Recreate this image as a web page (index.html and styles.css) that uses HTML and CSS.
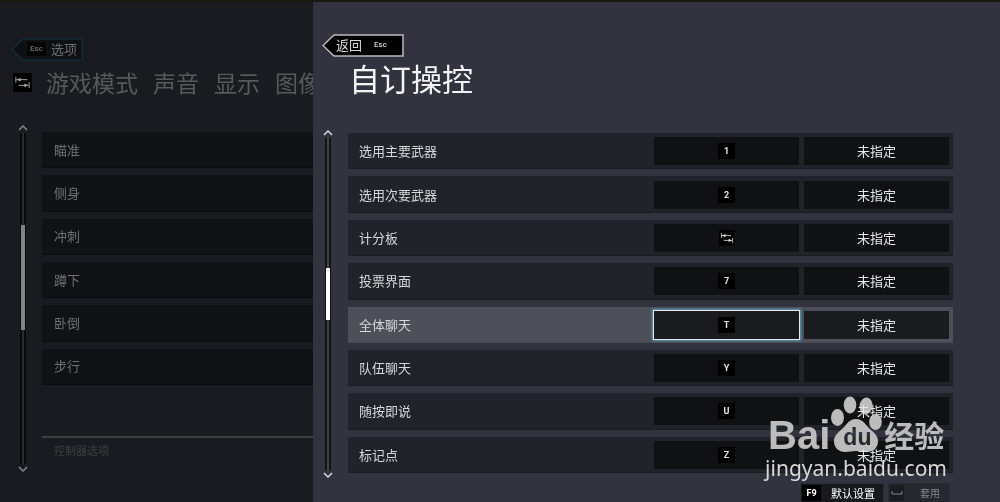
FILE: index.html
```html
<!DOCTYPE html>
<html lang="zh-CN">
<head>
<meta charset="utf-8">
<title>自订操控</title>
<link rel="stylesheet" href="styles.css">
</head>
<body>
<svg class="defs" aria-hidden="true">
  <symbol id="tab-key" viewBox="0 0 20 20">
    <path d="M3 4v6M3.500 7H15M17 10v6M6 13h10" fill="none" stroke="currentColor" stroke-width="1"/>
    <path d="M4 7l4-2v4zM16 13l-4-2v4z" fill="currentColor"/>
  </symbol>
  <symbol id="up" viewBox="0 0 10 6"><path d="M1 5l4-4 4 4" fill="none" stroke="currentColor" stroke-width="1.500"/></symbol>
  <symbol id="down" viewBox="0 0 10 6"><path d="M1 1l4 4 4-4" fill="none" stroke="currentColor" stroke-width="1.500"/></symbol>
</svg>
<main class="screen">
  <section class="options">
    <button class="back back-dim" type="button">
      <svg class="back-shape" viewBox="0 0 72 23" preserveAspectRatio="none"><path d="M1 11.500L12 1H71V22H12Z"/></svg>
      <kbd>Esc</kbd><span>选项</span>
    </button>
    <nav class="tabs">
      <svg class="tab-icon"><use href="#tab-key"/></svg>
      <a href="#mode">游戏模式</a><a href="#sound">声音</a><a href="#display">显示</a><a href="#video">图像</a>
    </nav>
    <div class="body">
      <div class="scroller">
        <svg class="arrow"><use href="#up"/></svg>
        <div class="track"><div class="thumb"></div></div>
        <svg class="arrow"><use href="#down"/></svg>
      </div>
      <div class="side">
        <ul class="list">
          <li>瞄准</li><li>侧身</li><li>冲刺</li><li>蹲下</li><li>卧倒</li><li>步行</li>
        </ul>
        <h2 class="group">控制器选项</h2>
      </div>
    </div>
  </section>
  <section class="panel">
    <button class="back" type="button">
      <svg class="back-shape" viewBox="0 0 82 23" preserveAspectRatio="none"><path d="M1 11.500L12 1H81V22H12Z"/></svg>
      <span>返回</span><kbd>Esc</kbd>
    </button>
    <h1 class="title">自订操控</h1>
    <div class="body">
      <div class="scroller">
        <svg class="arrow"><use href="#up"/></svg>
        <div class="track"><div class="thumb"></div></div>
        <svg class="arrow"><use href="#down"/></svg>
      </div>
      <div class="bindings">
        <div class="row"><span>选用主要武器</span><button type="button"><kbd>1</kbd></button><button type="button">未指定</button></div>
        <div class="row"><span>选用次要武器</span><button type="button"><kbd>2</kbd></button><button type="button">未指定</button></div>
        <div class="row"><span>计分板</span><button type="button" aria-label="Tab"><svg class="key-icon"><use href="#tab-key"/></svg></button><button type="button">未指定</button></div>
        <div class="row"><span>投票界面</span><button type="button"><kbd>7</kbd></button><button type="button">未指定</button></div>
        <div class="row active"><span>全体聊天</span><button type="button" class="selected"><kbd>T</kbd></button><button type="button">未指定</button></div>
        <div class="row"><span>队伍聊天</span><button type="button"><kbd>Y</kbd></button><button type="button">未指定</button></div>
        <div class="row"><span>随按即说</span><button type="button"><kbd>U</kbd></button><button type="button">未指定</button></div>
        <div class="row"><span>标记点</span><button type="button"><kbd>Z</kbd></button><button type="button">未指定</button></div>
      </div>
    </div>
    <footer class="actions">
      <button type="button" class="action"><kbd>F9</kbd><span>默认设置</span></button>
      <button type="button" class="action apply"><kbd><svg class="space" viewBox="0 0 12 5"><path d="M1 0v3h10V0" fill="none" stroke="currentColor"/></svg></kbd><span>套用</span></button>
    </footer>
  </section>
  <div class="watermark">
    <div class="brand">
      <span class="bai">Bai</span>
      <span class="paw">
        <svg viewBox="0 0 52 56">
          <ellipse cx="7.500" cy="21.500" rx="6.500" ry="8.500"/>
          <ellipse cx="20" cy="9" rx="6.300" ry="8.500"/>
          <ellipse cx="36" cy="10" rx="6.500" ry="8.500" transform="rotate(8 36 10)"/>
          <ellipse cx="45.500" cy="26" rx="6.300" ry="8"/>
          <path d="M26 23c5 0 8 3 11 7 4 5 11 8 11 15 0 7-5 11-11 11-4 0-7-1-11-1s-7 1-11 1C9 56 4 52 4 45c0-7 7-10 11-15 3-4 6-7 11-7z"/>
        </svg>
        <span class="du">du</span>
      </span>
      <span class="jing">经验</span>
    </div>
    <div class="url">jingyan.baidu.com</div>
  </div>
</main>
</body>
</html>
```
FILE: styles.css
```css
* { box-sizing: border-box; margin: 0; padding: 0; }
body {
  background: #32333f;
  color: #d6d7d8;
  font: 400 13px/20px "Noto Sans CJK SC", sans-serif;
  overflow: hidden;
}
button { border: 0; background: none; color: inherit; font: inherit; }
kbd { font: 700 9px/16px Roboto, sans-serif; }
.defs { position: absolute; width: 0; height: 0; }
.screen {
  position: relative;
  display: grid;
  grid-template-columns: 313fr 687fr;
  height: 100vh;
  border-top: 2px solid #19190f;
}
.options, .panel { display: flex; flex-direction: column; min-width: 0; min-height: 0; }
.options { background: #1a1b20; color: #6e6f70; overflow: hidden; padding: 36px 0 30px; }
.panel { background: #32333f; padding: 32px 47px 0 9px; }

.back {
  position: relative;
  display: flex;
  align-items: center;
  align-self: flex-start;
  gap: 12px;
  width: 82px;
  height: 23px;
  padding: 0 0 2px 14px;
  flex: none;
}
.back > span, .back > kbd { position: relative; }
.back-shape { position: absolute; inset: 0; width: 100%; height: 100%; }
.back-shape path { fill: #000; stroke: #b9babd; stroke-width: 1.500; }
.back kbd { font-size: 8px; font-weight: 500; }
.back-dim { width: 72px; gap: 5px; margin-left: 11px; padding-left: 16px; }
.back-dim .back-shape path { fill: #0e1014; stroke: #152c38; }
.back-dim kbd { width: 19px; height: 14px; line-height: 14px; background: #050506; text-align: center; }

.tabs { display: flex; align-items: center; gap: 15px; padding: 0 0 2px 13px; height: 44px; flex: none; white-space: nowrap; }
.tabs a { color: #58595b; font-size: 23px; line-height: 32px; text-decoration: none; }
.tab-icon { width: 19px; height: 19px; background: #000; color: #aaa; margin-right: -1px; flex: none; }
.title { font-size: 31px; font-weight: 400; line-height: 42px; padding: 0 0 2px 27px; color: #f4f4f5; flex: none; }

.body { display: flex; flex: 1; min-height: 0; }
.scroller { display: flex; flex-direction: column; align-items: center; gap: 2px; flex: none; }
.arrow { width: 10px; height: 6px; flex: none; }
.track { flex: 1; width: 6px; padding: 2px 1px; background: linear-gradient(90deg, #111214 2px, #434447 2px 4px, #111214 4px); }
.thumb { width: 4px; background: #fff; }
.options .body { padding-top: 20px; }
.options .scroller { width: 23px; margin-left: 11px; margin-right: 8px; color: #858687; }
.options .track { background: linear-gradient(90deg, #09090a 2px, #292a2b 2px 4px, #09090a 4px); }
.options .thumb { height: 32%; margin-top: 90px; background: #828384; }
.side { flex: 1; display: flex; flex-direction: column; padding-top: 7px; }
.list { flex: 1; display: grid; grid-auto-rows: 1fr; gap: 7px; list-style: none; }
.list li { display: flex; align-items: center; padding-left: 12px; background: #0f1316; border-bottom: 1px solid #0a0c0e; }
.group { margin: 51px 0 10px; padding: 2px 12px; border-top: 2px solid #3d3e40; color: #3e3f42; font-size: 11px; font-weight: 400; line-height: 20px; }

.panel .body { padding-top: 29px; }
.panel .scroller { width: 12px; margin-right: 14px; }
.panel .thumb { height: 16%; margin-top: 128px; }
.bindings { flex: 1; display: grid; grid-auto-rows: 1fr; gap: 7px; padding: 3px 0 5px; }
.row {
  display: grid;
  grid-template-columns: 1fr 145px 145px;
  align-items: center;
  gap: 5px;
  padding: 4px 4px 3px 11px;
  background: #20242a;
  border-bottom: 1px solid #191b1f;
}
.row button { height: 28px; display: flex; align-items: center; justify-content: center; background: #101113; color: #e6e6e6; }
.row kbd { width: 17px; height: 16px; background: #000; text-align: center; }
.row.active { background: #4d5059; border-color: #474a52; }
.row.active button { background: #1a1b1d; }
.row .selected { outline: 1px solid #e2edf1; box-shadow: 0 0 2px 2px #5a9cbb; }
.key-icon { width: 16px; height: 16px; background: #000; }

.actions { display: flex; justify-content: flex-end; gap: 4px; height: 19px; margin: 5px 3px 0 0; flex: none; }
.action { display: flex; align-items: center; gap: 10px; height: 20px; padding: 0 8px 0 1px; background: #17191d; border: 1px solid #20323d; font-size: 11px; line-height: 16px; color: #fff; }
.action kbd { width: 19px; height: 16px; background: #000; text-align: center; }
.apply { gap: 16px; padding-right: 9px; background: #26282f; border-color: #292b32; color: #85868a; font-size: 10px; }
.apply kbd { width: 14px; background: #1b1c21; }
.space { width: 12px; height: 5px; }

.watermark { position: absolute; right: 53px; bottom: 22px; color: #bcbcbc; mix-blend-mode: lighten; pointer-events: none; }
.brand { display: flex; align-items: flex-end; height: 60px; padding-left: 3px; }
.bai { font: 700 40px/42px "Liberation Sans", sans-serif; }
.paw { position: relative; width: 52px; height: 60px; }
.paw svg { width: 52px; height: 56px; fill: currentColor; }
.du { position: absolute; left: 13px; bottom: 7px; color: #24262c; font: 700 23px/24px "Liberation Sans", sans-serif; }
.jing { margin-left: 2px; font-size: 30px; font-weight: 700; line-height: 44px; }
.url { font: 400 21px/24px "Noto Sans", sans-serif; color: #d8d8d8; }
```
